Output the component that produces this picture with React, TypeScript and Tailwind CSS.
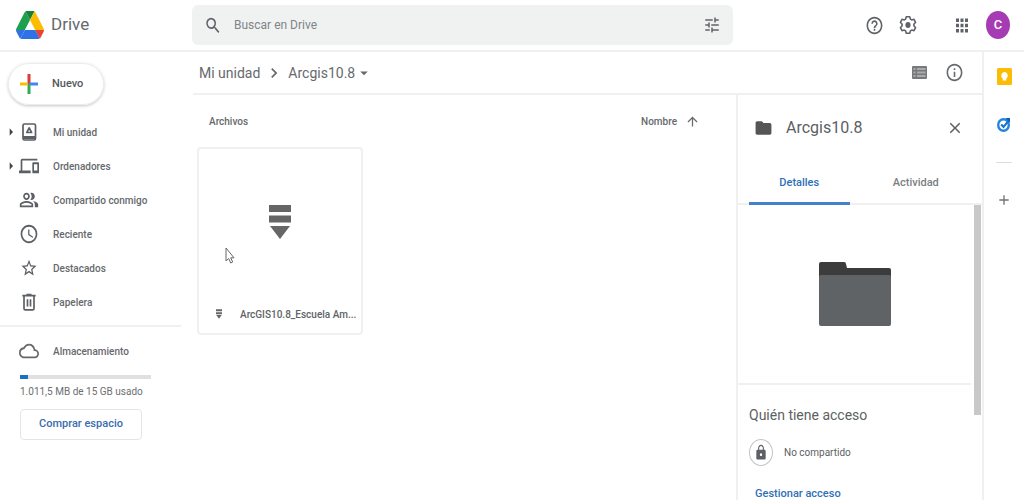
import { useState } from 'react';
import type { ReactNode } from 'react';
import {
  MdAccessTime,
  MdAdd,
  MdApps,
  MdArrowDropDown,
  MdArrowRight,
  MdArrowUpward,
  MdChevronRight,
  MdClose,
  MdDevices,
  MdFolder,
  MdHelpOutline,
  MdInfoOutline,
  MdLock,
  MdOutlineCloud,
  MdOutlinePeopleAlt,
  MdSearch,
  MdStarOutline,
  MdTune,
} from 'react-icons/md';

function DriveLogo() {
  return (
    <svg viewBox="0 0 87.3 78" preserveAspectRatio="none" className="w-7 h-7" aria-hidden="true">
      <path fill="#2f72e8" d="m6.6 66.85 3.85 6.65c.8 1.4 1.95 2.5 3.3 3.3l13.75-23.8h-27.5c0 1.55.4 3.1 1.2 4.5z" />
      <path fill="#1ea04c" d="m43.65 25-13.75-23.8c-1.35.8-2.5 1.9-3.3 3.3l-25.4 44a9.06 9.06 0 0 0 -1.2 4.5h27.5z" />
      <path fill="#ea4335" d="m73.55 76.8c1.35-.8 2.5-1.9 3.3-3.3l1.6-2.75 7.65-13.25c.8-1.4 1.2-2.95 1.2-4.5h-27.5l5.85 11.5z" />
      <path fill="#188038" d="m43.65 25 13.75-23.8c-1.35-.8-2.9-1.2-4.5-1.2h-18.5c-1.6 0-3.15.45-4.5 1.2z" />
      <path fill="#2f72e8" d="m59.8 53h-32.3l-13.75 23.8c1.35.8 2.9 1.2 4.5 1.2h50.8c1.6 0 3.15-.45 4.5-1.2z" />
      <path fill="#fbbc04" d="m73.4 26.5-12.7-22c-.8-1.4-1.95-2.5-3.3-3.3l-13.75 23.8 16.15 28h27.45c0-1.55-.4-3.1-1.2-4.5z" />
    </svg>
  );
}

function PlusMark() {
  return (
    <svg viewBox="0 0 18 20" className="w-[18px] h-5" aria-hidden="true">
      <path fill="#d93d33" d="M7.500 0h3v10h-3z" />
      <path fill="#34a853" d="M7.500 10h3v10h-3z" />
      <path fill="#4285f4" d="M9 8.500h9v3h-7.500z" />
      <path fill="#fbbc04" d="M0 8.500h7.500v3H0z" />
    </svg>
  );
}

function MyDriveIcon() {
  return (
    <svg viewBox="0 0 20 22" className="w-5 h-[22px]" fill="none" stroke="currentColor" aria-hidden="true">
      <rect x="4" y="3" width="12.500" height="16" rx="1.500" strokeWidth="1.700" />
      <path d="M4 16.500h12.500" strokeWidth="3" />
      <path d="M10.200 6.800 7.800 11.500h4.800z" strokeWidth="1.700" strokeLinejoin="round" />
    </svg>
  );
}

function TrashIcon() {
  return (
    <svg viewBox="0 0 24 24" preserveAspectRatio="none" className="w-5 h-[22px]" fill="none" stroke="currentColor" strokeWidth="2" aria-hidden="true">
      <path d="M4 5h16M9 4h6M6 5v14a1.500 1.500 0 0 0 1.500 1.500h9A1.500 1.500 0 0 0 18 19V5M10.200 9v8M13.800 9v8" />
    </svg>
  );
}

function GearIcon() {
  return (
    <svg viewBox="0 0 18 20" className="w-[18px] h-5" fill="none" stroke="currentColor" aria-hidden="true">
      <path
        d="M7.300 1.800h3.400l.7 2.300 1.300.8 2.300-.6 1.600 3-1.700 1.900v1.600l1.700 1.900-1.600 3-2.300-.6-1.300.8-.7 2.300H7.300l-.7-2.300-1.300-.8-2.300.6-1.600-3 1.700-1.900V9.200L1.400 7.300l1.600-3 2.300.6 1.300-.8z"
        strokeWidth="1.600"
        strokeLinejoin="round"
      />
      <ellipse cx="9" cy="10" rx="2.600" ry="2.900" fill="currentColor" stroke="none" />
    </svg>
  );
}

function ListViewIcon() {
  return (
    <svg viewBox="0 0 15 13" className="w-[15px] h-[13px]" aria-hidden="true">
      <rect width="15" height="13" rx="1" fill="#77797c" />
      <path fill="#a9abad" d="M1.500 2h2v2h-2zM1.500 5.500h2v2h-2zM1.500 9h2v2h-2zM5 2h8.500v2H5zM5 5.500h8.500v2H5zM5 9h8.500v2H5z" />
    </svg>
  );
}

function KeepIcon() {
  return (
    <svg viewBox="0 0 15 17" className="w-[15px] h-[17px]" aria-hidden="true">
      <rect width="15" height="17" rx="1.500" fill="#fbbc04" />
      <path fill="#fff" d="M7.500 4a3.300 3.600 0 0 0-1.800 6.600V12.500h3.600v-1.900A3.300 3.600 0 0 0 7.500 4z" />
    </svg>
  );
}

function TasksIcon() {
  return (
    <svg viewBox="0 0 14 15" className="w-[14px] h-[15px]" fill="none" aria-hidden="true">
      <ellipse cx="6.500" cy="8" rx="5.300" ry="5.800" stroke="#2684dc" strokeWidth="2.400" />
      <path d="m4.200 7.500 2.300 2.500L11 4.500" stroke="#1a73c8" strokeWidth="2" />
      <path d="M8.500 1H13v5z" fill="#0b62b8" />
    </svg>
  );
}

function ArchiveMark({ className }: { className: string }) {
  return (
    <svg viewBox="0 0 22 34" className={className} fill="#666" aria-hidden="true">
      <path d="M0 0h22v7H0zM0 10.500h22v7H0zM1 21h20L11 34z" />
    </svg>
  );
}

function BigFolder() {
  return (
    <svg viewBox="0 0 72 64" className="w-[72px] h-16" aria-hidden="true">
      <path fill="#3c3c3d" d="M2 0h23a2 2 0 0 1 2 2l1 4h42a2 2 0 0 1 2 2v12H0V2a2 2 0 0 1 2-2z" />
      <path fill="#5f6366" d="M2 13h68a2 2 0 0 1 2 2v47a2 2 0 0 1-2 2H2a2 2 0 0 1-2-2V15a2 2 0 0 1 2-2z" />
    </svg>
  );
}

function Pointer() {
  return (
    <svg viewBox="0 0 10 17" className="absolute left-[26px] top-[98px] w-[10px] h-[17px]" aria-hidden="true">
      <path d="M1 1v13l2.700-2.500 2 4.500 2-1-2-4.200H9z" fill="#fff" stroke="#666" strokeLinejoin="round" />
    </svg>
  );
}

const rowIcon = 'w-5 h-[22px]';

const navItems: { label: string; icon: ReactNode; expandable?: boolean }[] = [
  { label: 'Mi unidad', icon: <MyDriveIcon />, expandable: true },
  { label: 'Ordenadores', icon: <MdDevices preserveAspectRatio="none" className={rowIcon} />, expandable: true },
  { label: 'Compartido conmigo', icon: <MdOutlinePeopleAlt preserveAspectRatio="none" className={rowIcon} /> },
  { label: 'Reciente', icon: <MdAccessTime preserveAspectRatio="none" className={rowIcon} /> },
  { label: 'Destacados', icon: <MdStarOutline preserveAspectRatio="none" className="mx-px w-[18px] h-5" /> },
  { label: 'Papelera', icon: <TrashIcon /> },
];

function Header() {
  return (
    <header className="flex h-[52px] shrink-0 items-center border-b-2 border-[#f0f0f0] text-[#5f6368]">
      <a href="#" className="flex w-48 shrink-0 items-center gap-[7px] pl-4">
        <DriveLogo />
        <span className="text-[17px] text-[#66696d]">Drive</span>
      </a>
      <form role="search" className="flex h-10 flex-1 items-center rounded-md bg-[#f0f2f2] pl-3 pr-3">
        <button type="button" aria-label="Buscar">
          <MdSearch preserveAspectRatio="none" className="w-[18px] h-[21px]" />
        </button>
        <input
          type="text"
          aria-label="Buscar en Drive"
          placeholder="Buscar en Drive"
          className="ml-3 min-w-0 flex-1 bg-transparent text-xs outline-none placeholder:text-[#808487]"
        />
        <button type="button" aria-label="Opciones de búsqueda">
          <MdTune preserveAspectRatio="none" className="w-[18px] h-5" />
        </button>
      </form>
      <div className="flex w-[291px] shrink-0 items-center justify-end pr-[14px]">
        <button aria-label="Ayuda"><MdHelpOutline preserveAspectRatio="none" className="w-[19px] h-[21px]" /></button>
        <button aria-label="Configuración" className="ml-[15px]"><GearIcon /></button>
        <button aria-label="Aplicaciones" className="ml-9"><MdApps preserveAspectRatio="none" className="w-[18px] h-[21px]" /></button>
        <button aria-label="Cuenta" className="ml-[15px] h-7 w-6 rounded-[50%] bg-[#a63cb3] text-[13px] font-medium text-white">C</button>
      </div>
    </header>
  );
}

function Sidebar() {
  return (
    <aside className="w-[193px] shrink-0 text-[#55585c]">
      <button className="ml-2 mt-[11px] flex h-[42px] w-24 items-center gap-[14px] rounded-full border border-[#ececec] pl-[11px] text-[11px] font-medium shadow-[0_1px_3px_rgba(60,64,67,0.3)]">
        <PlusMark />
        Nuevo
      </button>
      <nav className="mt-[10px]">
        {navItems.map((item) => (
          <a key={item.label} href="#" className="flex h-[34px] items-center text-[10px] font-medium text-[#66696d]">
            <span className="flex w-[19px] justify-end text-[#444]">
              {item.expandable && <MdArrowRight className="h-[18px] w-4" preserveAspectRatio="none" />}
            </span>
            <span className="mr-[14px] text-[#5c5f63]">{item.icon}</span>
            {item.label}
          </a>
        ))}
      </nav>
      <div className="mr-3 mt-[6px] border-t-2 border-[#f0f0f0]" />
      <a href="#" className="mt-[7px] flex h-[34px] items-center gap-[14px] pl-[19px] text-[10px] font-medium text-[#66696d]">
        <MdOutlineCloud preserveAspectRatio="none" className="h-[22px] w-5" />
        Almacenamiento
      </a>
      <div className="ml-5 mr-[42px] mt-[7px] flex h-1 gap-px bg-[#e0e0e0]">
        <div className="w-2 bg-[#1a6fc0]" />
      </div>
      <p className="ml-5 mt-1 text-[10px] leading-[18px] text-[#6b6e72]">1.011,5 MB de 15 GB usado</p>
      <button className="ml-5 mt-2 h-[31px] w-[122px] rounded border border-[#e3e5e8] text-[11px] font-medium text-[#3a6cb0]">
        Comprar espacio
      </button>
    </aside>
  );
}

function Toolbar() {
  return (
    <div className="flex h-[43px] shrink-0 items-center border-b-2 border-[#f0f0f0] pl-[6px] pr-[18px] text-[#66696d]">
      <nav className="flex flex-1 items-center text-sm" aria-label="Ruta">
        <a href="#">Mi unidad</a>
        <MdChevronRight className="mx-1 h-5 w-5" />
        <button className="flex items-center">
          Arcgis10.8
          <MdArrowDropDown className="h-[18px] w-[18px]" />
        </button>
      </nav>
      <button aria-label="Vista de lista"><ListViewIcon /></button>
      <button aria-label="Ver detalles" className="ml-[18px]"><MdInfoOutline preserveAspectRatio="none" className="w-[19px] h-[21px]" /></button>
    </div>
  );
}

function Files() {
  return (
    <main className="min-w-0 flex-1 pl-1">
      <div className="mt-3 flex h-7 items-center justify-between pl-3 pr-[36px] text-[10px] font-medium text-[#66696d]">
        <h2>Archivos</h2>
        <button className="flex items-center gap-2">
          Nombre
          <MdArrowUpward className="h-[15px] w-[15px]" />
        </button>
      </div>
      <div className="relative mt-3 flex h-[188px] w-[166px] flex-col rounded border-2 border-[#f0f0f0]">
        <div className="flex flex-1 items-center justify-center">
          <ArchiveMark className="h-[34px] w-[22px]" />
        </div>
        <div className="flex h-[38px] items-center gap-[18px] pl-[17px] pr-[7px] text-[10px] font-medium text-[#606367]">
          <ArchiveMark className="h-[10px] w-[6px] shrink-0" />
          <span className="whitespace-nowrap">ArcGIS10.8_Escuela Am...</span>
        </div>
        <Pointer />
      </div>
    </main>
  );
}

function DetailsPanel() {
  const [tab, setTab] = useState('Detalles');

  return (
    <section className="flex w-[246px] shrink-0 flex-col border-l-2 border-[#f0f0f0] text-[#5c5f63]">
      <div className="flex h-[66px] shrink-0 items-center pl-4 pr-[18px]">
        <MdFolder preserveAspectRatio="none" className="h-5 w-[19px] text-[#555]" />
        <h1 className="ml-[13px] flex-1 text-base">Arcgis10.8</h1>
        <button aria-label="Cerrar"><MdClose className="h-[18px] w-[18px]" /></button>
      </div>
      <div role="tablist" className="flex h-11 shrink-0 border-b-2 border-[#f0f0f0] pl-[11px]">
        {['Detalles', 'Actividad'].map((name) => (
          <button
            key={name}
            role="tab"
            aria-selected={tab === name}
            onClick={() => setTab(name)}
            className={`h-11 border-b-[3px] pt-[3px] text-[11px] font-medium ${
              tab === name ? 'border-[#4183c6] text-[#2f6fb8]' : 'border-transparent text-[#7b7e82]'
            } mr-4 w-[101px]`}
          >
            {name}
          </button>
        ))}
      </div>
      <div className="flex min-h-0 flex-1">
        <div className="min-w-0 flex-1 overflow-hidden">
          <div className="mr-[3px] flex h-[180px] items-center justify-center border-b-2 border-[#f0f0f0]">
            <BigFolder />
          </div>
          <div className="pl-[11px]">
            <h2 className="mt-5 text-sm leading-5">Quién tiene acceso</h2>
            <div className="mt-[14px] flex items-center gap-[11px] text-[10px]">
              <span className="flex h-[27px] w-6 items-center justify-center rounded-[50%] border border-[#c4c4c4]">
                <MdLock preserveAspectRatio="none" className="h-[17px] w-[14px]" />
              </span>
              No compartido
            </div>
            <button className="ml-[6px] mt-[18px] block text-[11px] font-medium leading-5 text-[#2f6fb8]">Gestionar acceso</button>
          </div>
        </div>
        <div className="w-2 shrink-0">
          <div className="h-[210px] w-[7px] bg-[#c8c8c8]" />
        </div>
      </div>
    </section>
  );
}

function SideRail() {
  return (
    <aside className="flex w-[42px] shrink-0 flex-col items-center border-l-2 border-[#f0f0f0] text-[#6f7276]">
      <button aria-label="Keep" className="mt-4"><KeepIcon /></button>
      <button aria-label="Tasks" className="mt-8"><TasksIcon /></button>
      <div className="mt-[30px] h-px w-4 bg-[#dcdcdc]" />
      <button aria-label="Obtener complementos" className="mt-[29px]"><MdAdd className="h-4 w-4" /></button>
    </aside>
  );
}

export default function App() {
  return (
    <div className="flex h-screen flex-col overflow-hidden bg-white font-['Roboto','Liberation_Sans',sans-serif]">
      <Header />
      <div className="flex min-h-0 flex-1">
        <Sidebar />
        <div className="flex min-w-0 flex-1 flex-col">
          <Toolbar />
          <div className="flex min-h-0 flex-1">
            <Files />
            <DetailsPanel />
          </div>
        </div>
        <SideRail />
      </div>
    </div>
  );
}
